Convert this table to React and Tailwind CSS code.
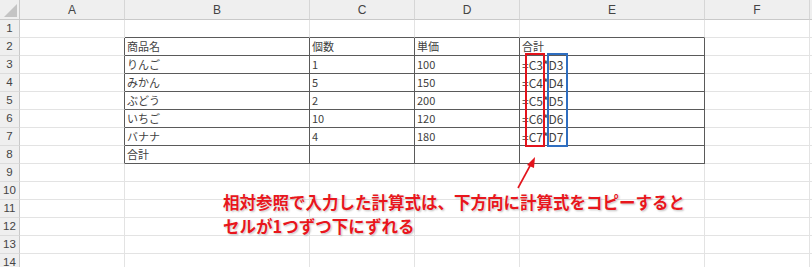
import React from 'react';

const COLS = ['A', 'B', 'C', 'D', 'E', 'F'];

const DATA = {
  2: ['商品名', '個数', '単価', '合計'],
  3: ['りんご', '1', '100', '=C3*D3'],
  4: ['みかん', '5', '150', '=C4*D4'],
  5: ['ぶどう', '2', '200', '=C5*D5'],
  6: ['いちご', '10', '120', '=C6*D6'],
  7: ['バナナ', '4', '180', '=C7*D7'],
  8: ['合計', '', '', ''],
};

const LIGHT = 'border-[#e3e3e3]';

function Cell({ row, col }) {
  const inTable = row >= 2 && row <= 8 && col >= 1 && col <= 4;
  const aboveTable = row === 1 && col >= 1 && col <= 4;
  const leftOfTable = col === 0 && row >= 2 && row <= 8;

  const right = inTable || leftOfTable ? 'border-r-[#5a5a5a]' : 'border-r-[#e3e3e3]';
  const bottom = inTable || aboveTable ? 'border-b-[#5a5a5a]' : 'border-b-[#e3e3e3]';
  const text = inTable ? DATA[row][col - 1] : '';
  const isFormula = text.startsWith('=');

  return (
    <div
      className={`border-r border-b ${right} ${bottom} pl-[2px] flex items-center ${isFormula ? 'text-[12px]' : 'text-[11px]'} text-[#3f3f3f] leading-none whitespace-nowrap overflow-hidden`}
    >
      {text}
    </div>
  );
}

export default function App() {
  const rows = Array.from({ length: 14 }, (_, i) => i + 1);

  return (
    <div className="w-[812px] h-[267px] overflow-hidden bg-white relative font-['Noto_Sans_CJK_JP','Noto_Sans',sans-serif]">
      <div className="grid grid-cols-[20px_105px_185px_105px_105px_185px_105px_2px] grid-rows-[20px_repeat(14,18px)]">
        {/* corner */}
        <div className="bg-[#efefef] border-r border-b border-[#c9c9c9] relative">
          <div className="absolute right-[2px] bottom-[2px] w-0 h-0 border-l-[13px] border-l-transparent border-b-[13px] border-b-[#c4c4c4]" />
        </div>
        {COLS.map((c) => (
          <div
            key={c}
            className="bg-[#efefef] border-r border-b border-r-[#d6d6d6] border-b-[#c9c9c9] flex items-center justify-center text-[12px] text-[#444] font-['Liberation_Sans',sans-serif]"
          >
            {c}
          </div>
        ))}
        <div className="bg-[#efefef] border-b border-[#c9c9c9]" />

        {rows.map((r) => (
          <React.Fragment key={r}>
            <div className="bg-[#efefef] border-r border-b border-r-[#c9c9c9] border-b-[#dcdcdc] flex items-center justify-center text-[11.5px] text-[#444] font-['Liberation_Sans',sans-serif]">
              {r}
            </div>
            {COLS.map((c, ci) => (
              <Cell key={c} row={r} col={ci} />
            ))}
            <div className={`border-b ${LIGHT}`} />
          </React.Fragment>
        ))}
      </div>

      {/* reference boxes */}
      <div className="absolute left-[525px] top-[53px] w-[20px] h-[94px] border-2 border-[#e3141c]" />
      <div className="absolute left-[547px] top-[53px] w-[21px] h-[94px] border-2 border-[#2f6ec0]" />

      {/* arrow */}
      <svg className="absolute left-0 top-0" width="812" height="267">
        <line x1="518" y1="188" x2="531" y2="164" stroke="#e3141c" strokeWidth="1.6" />
        <polygon points="535,157 527,165 534,168" fill="#e3141c" />
      </svg>

      {/* annotation */}
      <div className="absolute left-[223px] top-[191px] text-[16.5px] leading-[23.5px] font-bold text-[#e8161c] whitespace-nowrap [text-shadow:0_0_2px_#fff,1px_1px_2px_rgba(0,0,0,0.3)]">
        <div>相対参照で入力した計算式は、下方向に計算式をコピーすると</div>
        <div>セルが1つずつ下にずれる</div>
      </div>
    </div>
  );
}
